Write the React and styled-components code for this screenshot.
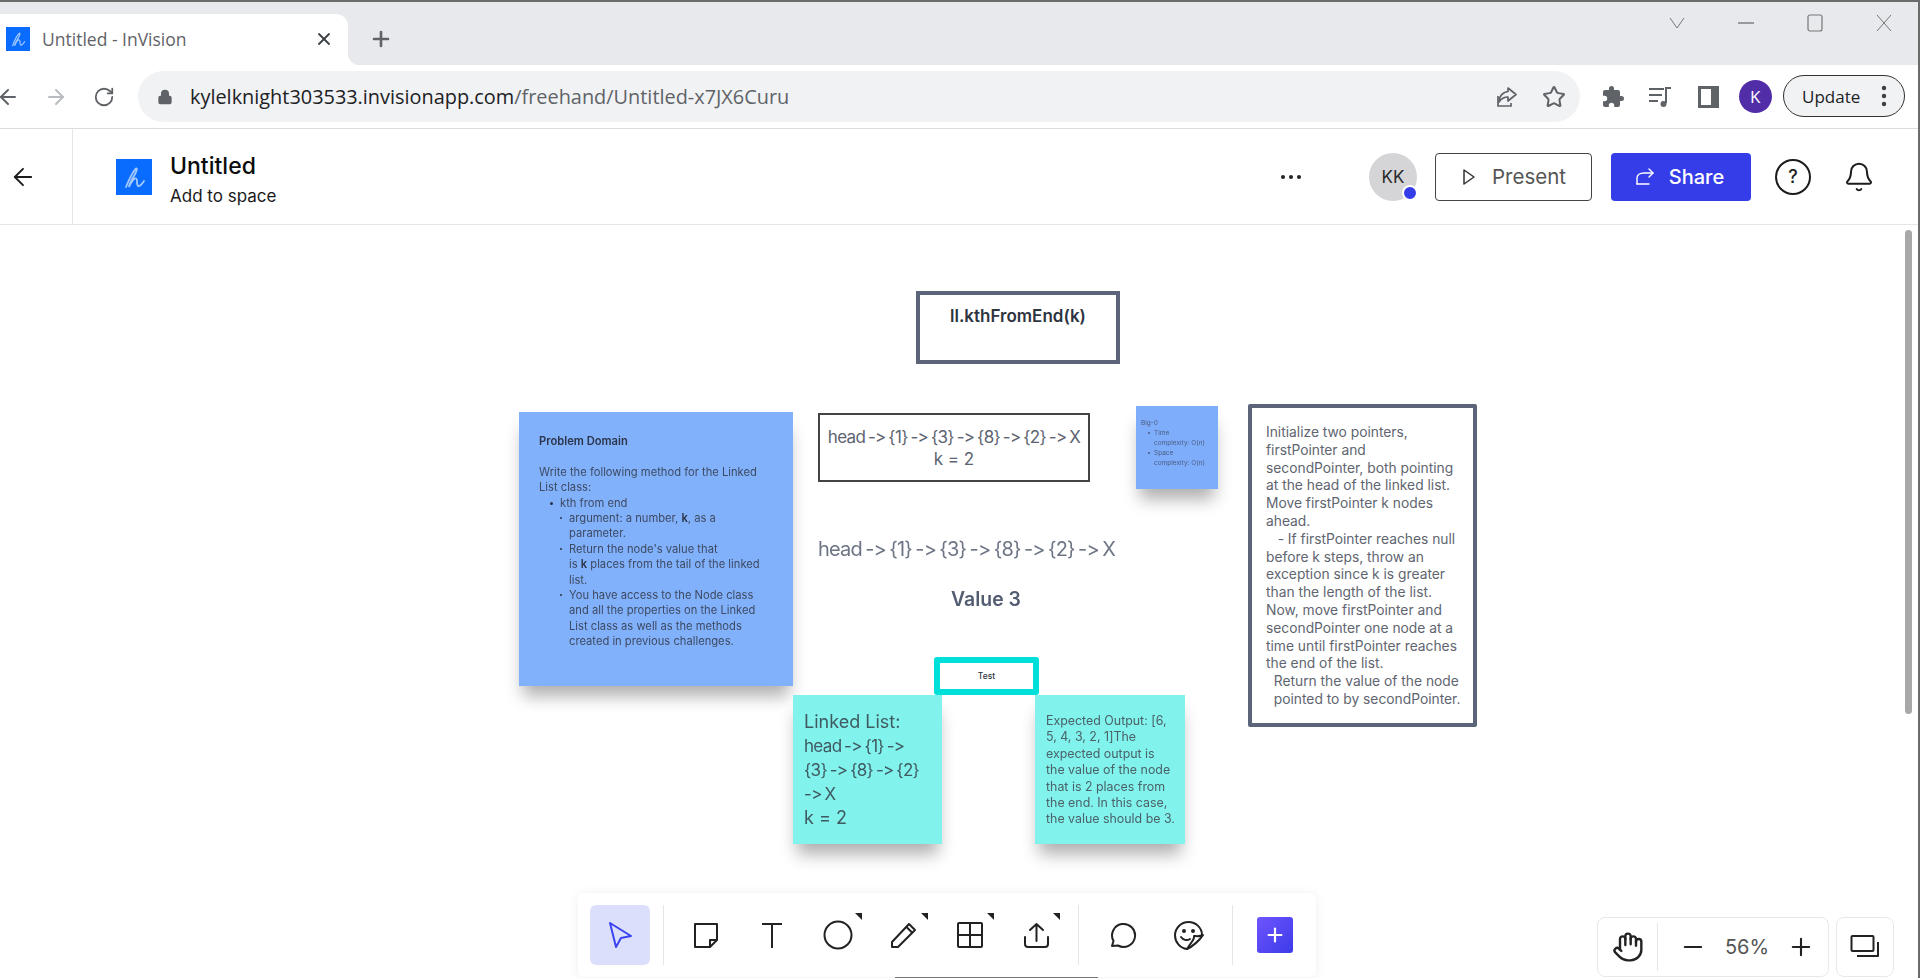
import React from "react";
import styled, { createGlobalStyle } from "styled-components";
import { ArrowLeft, ArrowRight, RotateCw, X, Plus, Minus, Star, Hand, Bell, Lock } from "lucide-react";

const UI_FONT = `"Open Sans", "Noto Sans", sans-serif`;
const BOARD_FONT = `Inter, "Noto Sans", sans-serif`;

const GlobalStyle = createGlobalStyle`
  html, body {
    margin: 0;
    padding: 0;
    overflow: hidden;
    background: #ffffff;
  }
`;

const problemLines = [
  { text: <b>Problem Domain</b>, level: 0 },
  { text: "\u00a0", level: 0 },
  { text: "Write the following method for the Linked", level: 0 },
  { text: "List class:", level: 0 },
  { text: "kth from end", level: 1, bullet: true },
  { text: <>argument: a number, <b>k</b>, as a</>, level: 2, bullet: true },
  { text: "parameter.", level: 2 },
  { text: "Return the node's value that", level: 2, bullet: true },
  { text: <>is <b>k</b> places from the tail of the linked</>, level: 2 },
  { text: "list.", level: 2 },
  { text: "You have access to the Node class", level: 2, bullet: true },
  { text: "and all the properties on the Linked", level: 2 },
  { text: "List class as well as the methods", level: 2 },
  { text: "created in previous challenges.", level: 2 },
];

const initLines = [
  "Initialize two pointers,",
  "firstPointer and",
  "secondPointer, both pointing",
  "at the head of the linked list.",
  "Move firstPointer k nodes",
  "ahead.",
  "\u00a0\u00a0 - If firstPointer reaches null",
  "before k steps, throw an",
  "exception since k is greater",
  "than the length of the list.",
  "Now, move firstPointer and",
  "secondPointer one node at a",
  "time until firstPointer reaches",
  "the end of the list.",
  "\u00a0 Return the value of the node",
  "\u00a0 pointed to by secondPointer.",
];

const expectedLines = [
  "Expected Output: [6,",
  "5, 4, 3, 2, 1]The",
  "expected output is",
  "the value of the node",
  "that is 2 places from",
  "the end. In this case,",
  "the value should be 3.",
];

const bigOLines = [
  { text: "Big-0", bullet: false, indent: 0 },
  { text: "Time", bullet: true, indent: 1 },
  { text: "complexity: O(n)", bullet: false, indent: 1 },
  { text: "Space", bullet: true, indent: 1 },
  { text: "complexity: O(n)", bullet: false, indent: 1 },
];

const LogoMark = ({ size }) => (
  <LogoBox $size={size}>
    <svg width={size} height={size} viewBox="0 0 36 36" fill="none">
      <path d="M10 28C13 20 18 11 20 9.500C21.500 8.500 21 12 18 17C15 22 13 26 13 28C15 23 18 19 20 19.500C22 20 20 25 22 27C24 28 26 25 28 22" stroke="#a4c9ff" strokeWidth="1.800" strokeLinecap="round" />
    </svg>
  </LogoBox>
);

const App = () => {
  return (
    <Window>
      <GlobalStyle />
      <TabStrip>
        <Tab>
          <LogoMark size={24} />
          <TabTitle>Untitled - InVision</TabTitle>
          <TabClose><X size={20} strokeWidth={2.2} /></TabClose>
        </Tab>
        <NewTab><Plus size={24} strokeWidth={2.6} /></NewTab>
        <WindowControls>
          <WindowControl>
            <svg width="16" height="12" viewBox="0 0 16 12" fill="none" stroke="#777" strokeWidth="1"><path d="M1 1l7 10 7-10" /></svg>
          </WindowControl>
          <WindowControl>
            <svg width="16" height="2" viewBox="0 0 16 2" fill="none" stroke="#666" strokeWidth="1.200"><path d="M0 1h16" /></svg>
          </WindowControl>
          <WindowControl>
            <svg width="16" height="18" viewBox="0 0 16 18" fill="none" stroke="#777" strokeWidth="1.200"><rect x="1" y="1" width="14" height="16" rx="2" /></svg>
          </WindowControl>
          <WindowControl>
            <svg width="16" height="18" viewBox="0 0 16 18" fill="none" stroke="#777" strokeWidth="1"><path d="M1 1l14 16M15 1L1 17" /></svg>
          </WindowControl>
        </WindowControls>
      </TabStrip>

      <BrowserBar>
        <NavButton><ArrowLeft size={24} /></NavButton>
        <NavButton $muted><ArrowRight size={24} /></NavButton>
        <NavButton><RotateCw size={22} /></NavButton>
        <UrlPill>
          <Lock size={16} color="#5f6368" fill="#5f6368" />
          <UrlText>kylelknight303533.invisionapp.com<UrlPath>/freehand/Untitled-x7JX6Curu</UrlPath></UrlText>
          <PillIcons>
            <svg width="26" height="26" viewBox="0 0 26 26" fill="none" stroke="#5f6368" strokeWidth="1.700">
              <path d="M4 12v10h13v-3" />
              <path d="M14 4l8 6.500-8 6.500v-4c-4 0-7 2-9 5 0-6 4-10 9-10.500z" strokeLinejoin="round" />
            </svg>
            <Star size={24} color="#5f6368" strokeWidth={2} />
          </PillIcons>
        </UrlPill>
        <ExtGroup>
          <ExtIcon>
            <svg width="24" height="24" viewBox="0 0 24 24" fill="#5f6368">
              <path d="M20.500 11H19V7a2 2 0 0 0-2-2h-4V3.500a2.500 2.500 0 0 0-5 0V5H4a2 2 0 0 0-2 2v3.800h1.500a2.700 2.700 0 0 1 0 5.400H2V20a2 2 0 0 0 2 2h3.800v-1.500a2.700 2.700 0 0 1 5.400 0V22H17a2 2 0 0 0 2-2v-4h1.500a2.500 2.500 0 0 0 0-5z" />
            </svg>
          </ExtIcon>
          <ExtIcon>
            <svg width="26" height="26" viewBox="0 0 26 26" fill="none" stroke="#5f6368" strokeWidth="2">
              <path d="M2 5h15M2 11h13M2 17h9" />
              <path d="M19 19V4h5" />
              <circle cx="16.500" cy="20" r="3" fill="#5f6368" stroke="none" />
            </svg>
          </ExtIcon>
          <ExtIcon>
            <svg width="24" height="24" viewBox="0 0 24 24" fill="none">
              <rect x="2" y="1" width="21" height="22" fill="#5f6368" />
              <rect x="5" y="4" width="10" height="16" fill="#ffffff" />
            </svg>
          </ExtIcon>
          <ExtIcon><ProfileBadge>K</ProfileBadge></ExtIcon>
        </ExtGroup>
        <UpdateButton>
          Update
          <svg width="6" height="22" viewBox="0 0 6 22" fill="#3c4043">
            <circle cx="3" cy="3" r="2.200" /><circle cx="3" cy="11" r="2.200" /><circle cx="3" cy="19" r="2.200" />
          </svg>
        </UpdateButton>
      </BrowserBar>

      <AppHeader>
        <BackCell><ArrowLeft size={28} strokeWidth={1.6} color="#1c1c1c" /></BackCell>
        <LogoSlot><LogoMark size={36} /></LogoSlot>
        <TitleBlock>
          <DocTitle>Untitled</DocTitle>
          <DocSub>Add to space</DocSub>
        </TitleBlock>
        <HeaderActions>
          <MoreDots><i /><i /><i /></MoreDots>
          <UserAvatar>KK<PresenceDot /></UserAvatar>
          <PresentButton>
            <svg width="16" height="18" viewBox="0 0 16 18" fill="none" stroke="#333" strokeWidth="1.500" strokeLinejoin="round">
              <path d="M3 2l10 7-10 7z" />
            </svg>
            Present
          </PresentButton>
          <ShareButton>
            <svg width="22" height="20" viewBox="0 0 22 20" fill="none" stroke="#fff" strokeWidth="1.400" strokeLinecap="round" strokeLinejoin="round">
              <path d="M2 17V11c0-3 3-5 7-5h9" />
              <path d="M14 2l4 4-4 4" />
              <path d="M2 17h12" />
            </svg>
            Share
          </ShareButton>
          <HelpIcon>?</HelpIcon>
          <BellSlot><Bell size={32} strokeWidth={1.5} color="#1c1c1c" /></BellSlot>
        </HeaderActions>
      </AppHeader>

      <Canvas>
        <Board>
          <TitleBox>ll.kthFromEnd(k)</TitleBox>

          <ProblemSticky>
            {problemLines.map((line, i) => (
              <ProblemLine key={i} $level={line.level} $bullet={line.bullet}>{line.text}</ProblemLine>
            ))}
          </ProblemSticky>

          <HeadBox>
            <ArrowLine>head -&gt; {"{1}"} -&gt; {"{3}"} -&gt; {"{8}"} -&gt; {"{2}"} -&gt; X</ArrowLine>
            <div>k = 2</div>
          </HeadBox>

          <BigOSticky>
            {bigOLines.map((line, i) => (
              <BigOLine key={i} $indent={line.indent} $bullet={line.bullet}>{line.text}</BigOLine>
            ))}
          </BigOSticky>

          <InitBox>
            {initLines.map((line, i) => <div key={i}>{line}</div>)}
          </InitBox>

          <FreeHead><ArrowLine>head -&gt; {"{1}"} -&gt; {"{3}"} -&gt; {"{8}"} -&gt; {"{2}"} -&gt; X</ArrowLine></FreeHead>
          <ValueText>Value 3</ValueText>

          <TestBox>Test</TestBox>

          <LinkedSticky>
            <div>Linked List:</div>
            <ArrowLine>head -&gt; {"{1}"} -&gt;</ArrowLine>
            <ArrowLine>{"{3}"} -&gt; {"{8}"} -&gt; {"{2}"}</ArrowLine>
            <ArrowLine>-&gt; X</ArrowLine>
            <div>k = 2</div>
          </LinkedSticky>
          <ExpectedSticky>
            {expectedLines.map((line, i) => <div key={i}>{line}</div>)}
          </ExpectedSticky>
        </Board>

        <ScrollThumb />

        <ToolDock>
          <SelectedTool>
            <svg width="26" height="28" viewBox="0 0 26 28" fill="none" stroke="#3a44f0" strokeWidth="2" strokeLinejoin="round">
              <path d="M3 2l21 13-10 2-5 9z" />
            </svg>
          </SelectedTool>
          <DockDivider $left={13} $right={9} />
          <ToolSlot>
            <svg width="26" height="27" viewBox="0 0 26 27" fill="none" stroke="#222" strokeWidth="2" strokeLinejoin="round">
              <path d="M2 2h22v16l-7 7H2z" />
              <path d="M24 18h-7v7" />
            </svg>
          </ToolSlot>
          <ToolSlot>
            <svg width="22" height="27" viewBox="0 0 22 27" fill="none" stroke="#222" strokeWidth="2">
              <path d="M1 2h20M11 2v24" />
            </svg>
          </ToolSlot>
          <ToolSlot $corner>
            <svg width="30" height="30" viewBox="0 0 30 30" fill="none" stroke="#222" strokeWidth="2">
              <circle cx="15" cy="15" r="13.500" />
            </svg>
          </ToolSlot>
          <ToolSlot $corner>
            <svg width="28" height="28" viewBox="0 0 28 28" fill="none" stroke="#222" strokeWidth="2" strokeLinejoin="round">
              <path d="M2 21L19 3l6 6L8 26H2z" />
              <path d="M16.500 6l6 6" />
            </svg>
          </ToolSlot>
          <ToolSlot $corner>
            <svg width="28" height="28" viewBox="0 0 28 28" fill="none" stroke="#222" strokeWidth="2" strokeLinejoin="round">
              <rect x="2" y="2" width="24" height="24" rx="1" />
              <path d="M14 2v24M2 14h24" />
            </svg>
          </ToolSlot>
          <ToolSlot $corner>
            <svg width="27" height="27" viewBox="0 0 27 27" fill="none" stroke="#222" strokeWidth="2" strokeLinecap="round" strokeLinejoin="round">
              <path d="M2 15v7a3 3 0 0 0 3 3h17a3 3 0 0 0 3-3v-7" />
              <path d="M13.500 19V2M7 8l6.500-6L20 8" />
            </svg>
          </ToolSlot>
          <DockDivider $left={9} $right={11} />
          <ToolSlot>
            <svg width="28" height="28" viewBox="0 0 28 28" fill="none" stroke="#222" strokeWidth="2" strokeLinejoin="round">
              <path d="M3 25l1.500-5A11.500 11.500 0 1 1 9 24.500z" />
            </svg>
          </ToolSlot>
          <ToolSlot>
            <svg width="32" height="31" viewBox="0 0 32 31" fill="none" stroke="#222" strokeWidth="2" strokeLinejoin="round" strokeLinecap="round">
              <path d="M14 29C7 28 2 22 2 15.500 2 8 8 2 15.500 2 23 2 29 8 29 15" />
              <path d="M14 29c5-2 13-9 16-14-4 2-7 1-9 1 1 3-2 5-7 13z" />
              <path d="M8 17c2 3 6 4 9 2" />
              <circle cx="11" cy="11" r="1" fill="#222" />
              <circle cx="20" cy="11" r="1" fill="#222" />
            </svg>
          </ToolSlot>
          <DockDivider $left={10} $right={24} />
          <AddButton><Plus size={22} strokeWidth={2.4} color="#fff" /></AddButton>
        </ToolDock>
        <DockEdge />

        <ZoomControls>
          <ZoomPanel>
            <HandCell><Hand size={32} strokeWidth={1.8} color="#222" /></HandCell>
            <ZoomCell>
              <Minus size={28} strokeWidth={1.8} color="#222" />
              <ZoomValue>56%</ZoomValue>
              <Plus size={28} strokeWidth={1.8} color="#222" />
            </ZoomCell>
          </ZoomPanel>
          <MinimapPanel>
            <svg width="30" height="26" viewBox="0 0 30 26" fill="none" stroke="#222" strokeWidth="2" strokeLinejoin="round">
              <rect x="1.500" y="2" width="22" height="15" rx="1" />
              <path d="M28 8v14H7" />
            </svg>
          </MinimapPanel>
        </ZoomControls>
      </Canvas>
    </Window>
  );
};

export default App;

const Window = styled.div`
  width: 1920px;
  height: 978px;
  box-sizing: border-box;
  border-top: 2px solid #6b6b6b;
  border-right: 2px solid #6b6b6b;
  display: flex;
  flex-direction: column;
  overflow: hidden;
  background: #ffffff;
  font-family: ${UI_FONT};
`;

const TabStrip = styled.div`
  height: 63px;
  flex: none;
  background: #e8e9ed;
  display: flex;
  align-items: flex-end;
`;

const LogoBox = styled.div`
  width: ${(p) => p.$size}px;
  height: ${(p) => p.$size}px;
  background: #0a6cff;
  flex: none;
  display: flex;
`;

const Tab = styled.div`
  position: relative;
  width: 348px;
  height: 51px;
  background: #ffffff;
  border-top-right-radius: 12px;
  display: flex;
  align-items: center;
  padding: 0 14px 2px 6px;
  box-sizing: border-box;
  &::after {
    content: "";
    position: absolute;
    left: 100%;
    bottom: 0;
    width: 12px;
    height: 12px;
    background: radial-gradient(circle at 100% 0, transparent 12px, #ffffff 12.5px);
  }
`;

const TabTitle = styled.span`
  margin-left: 12px;
  font-size: 17.500px;
  color: #5f6368;
  white-space: nowrap;
`;

const TabClose = styled.span`
  margin-left: auto;
  display: flex;
  color: #3c4043;
`;

const NewTab = styled.div`
  width: 66px;
  height: 51px;
  padding-bottom: 2px;
  box-sizing: border-box;
  display: flex;
  align-items: center;
  justify-content: center;
  color: #5f6368;
`;

const WindowControls = styled.div`
  margin-left: auto;
  align-self: flex-start;
  height: 42px;
  display: flex;
`;

const WindowControl = styled.div`
  width: 69px;
  display: flex;
  align-items: center;
  justify-content: center;
`;

const BrowserBar = styled.div`
  height: 64px;
  flex: none;
  box-sizing: border-box;
  border-bottom: 1px solid #dcdcdc;
  display: flex;
  align-items: flex-start;
  padding-top: 6px;
`;

const NavButton = styled.div`
  width: 48px;
  height: 51px;
  flex: none;
  display: flex;
  align-items: center;
  justify-content: center;
  color: ${(p) => (p.$muted ? "#b9bcc0" : "#5f6368")};
  &:first-child {
    margin-left: -16px;
  }
`;

const UrlPill = styled.div`
  width: 1442px;
  height: 51px;
  margin-left: 10px;
  flex: none;
  box-sizing: border-box;
  border-radius: 26px;
  background: #f1f2f4;
  display: flex;
  align-items: center;
  padding: 0 14px 0 19px;
`;

const UrlText = styled.span`
  margin-left: 17px;
  font-size: 19.900px;
  color: #202124;
  white-space: nowrap;
`;

const UrlPath = styled.span`
  color: #5f6368;
`;

const PillIcons = styled.div`
  margin-left: auto;
  display: flex;
  align-items: center;
  gap: 22px;
`;

const ExtGroup = styled.div`
  margin-left: 9px;
  display: flex;
  flex: none;
`;

const ExtIcon = styled.div`
  width: 47.500px;
  height: 51px;
  flex: none;
  display: flex;
  align-items: center;
  justify-content: center;
`;

const ProfileBadge = styled.div`
  width: 33px;
  height: 33px;
  border-radius: 50%;
  background: #512da8;
  color: #ffffff;
  font-size: 17px;
  display: flex;
  align-items: center;
  justify-content: center;
`;

const UpdateButton = styled.div`
  width: 122px;
  height: 42px;
  margin: 4px 0 0 4px;
  flex: none;
  box-sizing: border-box;
  border: 1px solid #333;
  border-radius: 21px;
  background: #f1f2f4;
  color: #202124;
  font-size: 17px;
  display: flex;
  align-items: center;
  justify-content: space-between;
  padding: 0 17px 0 18px;
`;

const AppHeader = styled.header`
  height: 96px;
  flex: none;
  box-sizing: border-box;
  border-bottom: 1px solid #e6e6e6;
  display: flex;
  align-items: stretch;
`;

const BackCell = styled.div`
  width: 73px;
  box-sizing: border-box;
  border-right: 1px solid #e6e6e6;
  display: flex;
  align-items: center;
  padding-left: 9px;
`;

const LogoSlot = styled.div`
  margin-left: 43px;
  display: flex;
  align-items: center;
`;

const TitleBlock = styled.div`
  margin-left: 18px;
  padding-top: 23px;
`;

const DocTitle = styled.div`
  font-family: ${BOARD_FONT};
  font-size: 23px;
  line-height: 28px;
  font-weight: 500;
  color: #0c0c0c;
`;

const DocSub = styled.div`
  font-family: ${BOARD_FONT};
  margin-top: 5px;
  font-size: 17px;
  line-height: 22px;
  color: #1a1a1a;
`;

const HeaderActions = styled.div`
  margin-left: auto;
  display: flex;
  align-items: center;
  padding-right: 43px;
`;

const MoreDots = styled.div`
  width: 32px;
  display: flex;
  justify-content: center;
  gap: 4px;
  i {
    width: 4px;
    height: 4px;
    border-radius: 50%;
    background: #222;
  }
`;

const UserAvatar = styled.div`
  position: relative;
  width: 48px;
  height: 48px;
  margin-left: 62px;
  border-radius: 50%;
  background: #d5d5d8;
  color: #2a2a2a;
  font-family: ${BOARD_FONT};
  font-size: 17px;
  display: flex;
  align-items: center;
  justify-content: center;
`;

const PresenceDot = styled.span`
  position: absolute;
  right: -1px;
  bottom: 0;
  width: 12px;
  height: 12px;
  border-radius: 50%;
  border: 2px solid #ffffff;
  background: #353de8;
`;

const PresentButton = styled.div`
  width: 157px;
  height: 48px;
  margin-left: 18px;
  box-sizing: border-box;
  border: 1px solid #444;
  border-radius: 4px;
  display: flex;
  align-items: center;
  justify-content: center;
  gap: 15px;
  font-family: ${BOARD_FONT};
  font-size: 20.500px;
  color: #555;
`;

const ShareButton = styled.div`
  width: 140px;
  height: 48px;
  margin-left: 19px;
  padding-right: 3px;
  box-sizing: border-box;
  border-radius: 4px;
  background: #353de8;
  display: flex;
  align-items: center;
  justify-content: center;
  gap: 12px;
  font-family: ${BOARD_FONT};
  font-size: 20px;
  font-weight: 500;
  color: #ffffff;
`;

const HelpIcon = styled.div`
  width: 36px;
  height: 36px;
  margin-left: 24px;
  box-sizing: border-box;
  border: 2px solid #1c1c1c;
  border-radius: 50%;
  display: flex;
  align-items: center;
  justify-content: center;
  font-family: ${BOARD_FONT};
  font-size: 18px;
  font-weight: 500;
  color: #1c1c1c;
`;

const BellSlot = styled.div`
  margin-left: 32px;
  display: flex;
`;

const Canvas = styled.main`
  position: relative;
  flex: 1;
  overflow: hidden;
  background: #ffffff;
`;

const Board = styled.div`
  position: absolute;
  inset: 0;
  font-family: ${BOARD_FONT};
  font-variant-ligatures: none;
  font-feature-settings: "calt" 0, "liga" 0;
  filter: blur(0.450px);
`;

const ArrowLine = styled.div`
  word-spacing: -0.08em;
  letter-spacing: -0.04em;
`;

const OutlineBox = styled.div`
  position: absolute;
  box-sizing: border-box;
  background: #ffffff;
  white-space: nowrap;
`;

const Sticky = styled.div`
  position: absolute;
  box-sizing: border-box;
  box-shadow: 0 14px 16px -4px rgba(0, 0, 0, 0.32);
  white-space: nowrap;
`;

const TitleBox = styled(OutlineBox)`
  left: 916px;
  top: 66px;
  width: 204px;
  height: 73px;
  border: 4px solid #5b6478;
  padding-top: 10px;
  text-align: center;
  font-size: 17px;
  line-height: 22px;
  font-weight: 600;
  color: #2e3440;
`;

const ProblemSticky = styled(Sticky)`
  left: 519px;
  top: 187px;
  width: 274px;
  height: 274px;
  background: #82b1fb;
  padding: 22px 0 0 20px;
  font-size: 11.200px;
  line-height: 15.400px;
  color: #3d4a63;
  b {
    font-weight: 600;
    color: #2b3448;
  }
`;

const ProblemLine = styled.div`
  position: relative;
  margin-left: ${(p) => [0, 21, 30][p.$level]}px;
  &::before {
    content: ${(p) => (p.$bullet ? '""' : "none")};
    position: absolute;
    left: ${(p) => (p.$level === 1 ? -10 : -9)}px;
    top: 6px;
    width: ${(p) => (p.$level === 1 ? 3 : 2)}px;
    height: ${(p) => (p.$level === 1 ? 3 : 2)}px;
    border-radius: 50%;
    background: #2b3448;
  }
`;

const HeadBox = styled(OutlineBox)`
  left: 818px;
  top: 188px;
  width: 272px;
  height: 69px;
  border: 2px solid #444;
  padding-top: 11px;
  text-align: center;
  font-size: 17px;
  line-height: 22px;
  color: #5d6370;
`;

const BigOSticky = styled(Sticky)`
  left: 1136px;
  top: 181px;
  width: 82px;
  height: 83px;
  background: #7eaefb;
  padding: 12px 0 0 5px;
  font-size: 6.500px;
  line-height: 10px;
  color: #4b5c80;
`;

const BigOLine = styled.div`
  position: relative;
  margin-left: ${(p) => p.$indent * 13}px;
  &::before {
    content: ${(p) => (p.$bullet ? '""' : "none")};
    position: absolute;
    left: -6px;
    top: 4px;
    width: 2px;
    height: 2px;
    border-radius: 50%;
    background: #4b5c80;
  }
`;

const InitBox = styled(OutlineBox)`
  left: 1248px;
  top: 179px;
  width: 229px;
  height: 323px;
  border: 4px solid #5b6478;
  border-radius: 2px;
  padding: 16px 0 0 14px;
  font-size: 13.800px;
  line-height: 17.800px;
  color: #60656f;
`;

const FreeHead = styled.div`
  position: absolute;
  left: 818px;
  top: 312px;
  font-size: 20px;
  line-height: 24px;
  white-space: nowrap;
  color: #6d7585;
`;

const ValueText = styled.div`
  position: absolute;
  left: 906px;
  top: 362px;
  width: 160px;
  text-align: center;
  font-size: 19.400px;
  line-height: 24px;
  font-weight: 600;
  color: #535d72;
`;

const TestBox = styled(OutlineBox)`
  left: 934px;
  top: 432px;
  width: 105px;
  height: 38px;
  border: 6px solid #00e0d8;
  border-radius: 3px;
  display: flex;
  align-items: center;
  justify-content: center;
  font-size: 8.500px;
  font-weight: 500;
  color: #2e3440;
`;

const LinkedSticky = styled(Sticky)`
  left: 793px;
  top: 470px;
  width: 149px;
  height: 149px;
  background: #82f2ec;
  padding: 15px 0 0 11px;
  font-size: 18px;
  line-height: 24px;
  color: #3f5a60;
  ${ArrowLine} {
    font-size: 17px;
  }
`;

const ExpectedSticky = styled(Sticky)`
  left: 1035px;
  top: 470px;
  width: 150px;
  height: 149px;
  background: #82f2ec;
  padding: 18px 0 0 11px;
  font-size: 12.400px;
  line-height: 16.400px;
  color: #4a6268;
`;

const ScrollThumb = styled.div`
  position: absolute;
  left: 1905px;
  top: 5px;
  width: 7px;
  height: 484px;
  border-radius: 4px;
  background: #a8a8a8;
`;

const ToolDock = styled.div`
  position: absolute;
  left: 578px;
  top: 668px;
  width: 738px;
  height: 84px;
  box-sizing: border-box;
  padding-left: 12px;
  border-radius: 6px;
  background: #ffffff;
  box-shadow: 0 1px 12px rgba(0, 0, 0, 0.07);
  display: flex;
  align-items: center;
`;

const DockEdge = styled.div`
  position: absolute;
  left: 895px;
  bottom: 0;
  width: 203px;
  height: 1px;
  background: #777;
`;

const SelectedTool = styled.div`
  width: 60px;
  height: 60px;
  flex: none;
  border-radius: 6px;
  background: #dcdffb;
  display: flex;
  align-items: center;
  justify-content: center;
`;

const DockDivider = styled.div`
  width: 1px;
  height: 60px;
  flex: none;
  background: #e6e6e6;
  margin-left: ${(p) => p.$left}px;
  margin-right: ${(p) => p.$right}px;
`;

const ToolSlot = styled.div`
  position: relative;
  width: 66px;
  height: 60px;
  flex: none;
  display: flex;
  align-items: center;
  justify-content: center;
  &::after {
    content: ${(p) => (p.$corner ? '""' : "none")};
    position: absolute;
    left: 50px;
    top: 8px;
    width: 7px;
    height: 7px;
    background: #222;
    clip-path: polygon(0 0, 100% 0, 100% 100%);
  }
`;

const AddButton = styled.div`
  width: 36px;
  height: 36px;
  flex: none;
  border-radius: 3px;
  background: linear-gradient(135deg, #6f55ff, #3b3be8);
  display: flex;
  align-items: center;
  justify-content: center;
`;

const ZoomControls = styled.div`
  position: absolute;
  left: 1597px;
  top: 692px;
  display: flex;
  gap: 7px;
`;

const ZoomPanel = styled.div`
  width: 232px;
  height: 60px;
  box-sizing: border-box;
  border: 1px solid #e8e8e8;
  border-radius: 8px;
  background: #ffffff;
  display: flex;
  align-items: center;
`;

const HandCell = styled.div`
  width: 60px;
  height: 48px;
  box-sizing: border-box;
  border-right: 1px solid #e8e8e8;
  display: flex;
  align-items: center;
  justify-content: center;
`;

const ZoomCell = styled.div`
  flex: 1;
  padding: 0 13px 0 21px;
  display: flex;
  align-items: center;
  justify-content: space-between;
`;

const ZoomValue = styled.span`
  font-family: ${BOARD_FONT};
  font-size: 20px;
  color: #555;
`;

const MinimapPanel = styled.div`
  width: 58px;
  height: 60px;
  box-sizing: border-box;
  border: 1px solid #e8e8e8;
  border-radius: 8px;
  background: #ffffff;
  display: flex;
  align-items: center;
  justify-content: center;
`;
